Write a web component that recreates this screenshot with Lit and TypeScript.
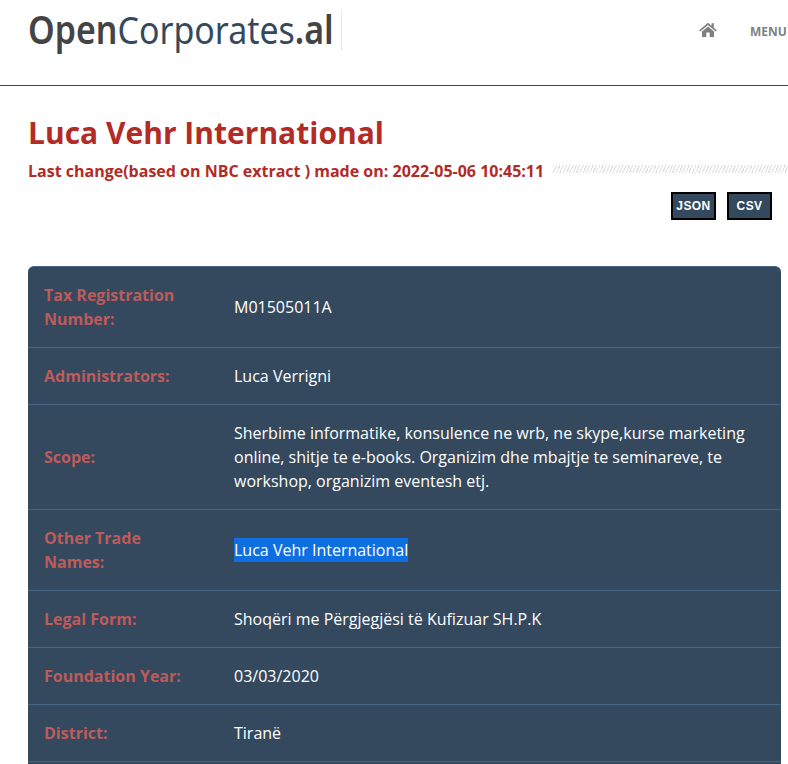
import { LitElement, html, css } from "lit";
import { customElement } from "lit/decorators.js";

const rows: [string, string][] = [
  ["Tax Registration Number:", "M01505011A"],
  ["Administrators:", "Luca Verrigni"],
  ["Scope:", "Sherbime informatike, konsulence ne wrb, ne skype,kurse marketing online, shitje te e-books. Organizim dhe mbajtje te seminareve, te workshop, organizim eventesh etj."],
  ["Other Trade Names:", "@Luca Vehr International"],
  ["Legal Form:", "Shoqëri me Përgjegjësi të Kufizuar SH.P.K"],
  ["Foundation Year:", "03/03/2020"],
  ["District:", "Tiranë"],
];

@customElement("app-root")
export class AppRoot extends LitElement {
  static styles = css`
    :host { display: block; height: 764px; overflow: hidden; background: #fff; font-family: "Open Sans", sans-serif; font-size: 16px; line-height: 24px; }
    header { height: 85px; border-bottom: 1px solid #34495e; display: flex; justify-content: space-between; box-sizing: content-box; }
    .logo { margin: 10px 0 0 28px; width: 304px; height: 41px; padding-right: 9px; border-right: 1px solid #e8e8e8; font-family: "Noto Sans", sans-serif; font-size: 39px; line-height: 37px; color: #34495e; white-space: nowrap; }
    .logo span { display: inline-block; transform: scaleX(0.87); transform-origin: left center; }
    .logo b { font-weight: 600; color: #444; }
    nav { display: flex; align-items: flex-start; }
    nav svg { display: block; margin-top: 22px; width: 18px; height: 15px; }
    nav span { margin: 20px 0 0 33px; width: 38px; overflow: hidden; font-size: 12px; font-weight: 700; color: #7f7f7f; white-space: nowrap; line-height: 24px; }
    main { padding: 0 7px 0 28px; }
    h1 { margin: 29px 0 0; font-size: 30px; line-height: 36px; font-weight: 700; color: #b22b27; }
    .change { display: flex; margin: 8px -7px 0 0; align-items: flex-start; }
    .change p { margin: 0; font-size: 16px; font-weight: 700; line-height: 24px; color: #b22b27; white-space: nowrap; }
    .stripes { flex: 1; height: 8px; margin: 6px 0 0 9px; background: repeating-linear-gradient(115deg, #dedede 0 1px, #fff 1px 3px); }
    .actions { display: flex; justify-content: flex-end; gap: 11px; margin: 9px 9px 0 0; }
    .actions span { box-sizing: border-box; height: 28px; padding: 0 3px; min-width: 45px; display: flex; align-items: center; justify-content: center; border: 2px solid #000; background: #34495e; color: #fff; font-family: "Liberation Sans", sans-serif; font-size: 12px; font-weight: 700; letter-spacing: 0.4px; }
    table { width: 753px; margin-top: 46px; border-collapse: separate; border-spacing: 0; background: #34495e; border-top: 1px solid #4a6583; border-radius: 6px; table-layout: fixed; }
    td { padding: 16px; border-bottom: 1px solid #4a6583; vertical-align: middle; color: #fff; }
    td.label { width: 158px; font-weight: 700; color: #bd5b5b; }
    td.val { padding-left: 16px; padding-right: 20px; }
    tr.more td { height: 24px; }
    .sel { background: #0f6fe0; display: inline-block; }
  `;

  render() {
    return html`
      <header>
        <div class="logo"><span><b>Open</b>Corporates<b>.al</b></span></div>
        <nav>
          <svg viewBox="0 0 18 15"><path fill="#7f7f7f" d="M9 0.8 0.2 8.2 1.3 9.4 9 3 16.7 9.4 17.8 8.2 14.8 5.7V1.3H12.6V3.8ZM3 9.6V15H7.3V10.6H10.7V15H15V9.6L9 4.6Z"/></svg>
          <span>MENU</span>
        </nav>
      </header>
      <main>
        <h1>Luca Vehr International</h1>
        <div class="change">
          <p>Last change(based on NBC extract ) made on: 2022-05-06 10:45:11</p>
          <div class="stripes"></div>
        </div>
        <div class="actions"><span>JSON</span><span>CSV</span></div>
        <table>
          ${rows.map(([k, v]) => html`<tr>
            <td class="label">${k}</td>
            <td class="val">${v.startsWith("@") ? html`<span class="sel">${v.slice(1)}</span>` : v}</td>
          </tr>`)}
          <tr class="more"><td class="label"></td><td class="val"></td></tr>
        </table>
      </main>
    `;
  }
}
